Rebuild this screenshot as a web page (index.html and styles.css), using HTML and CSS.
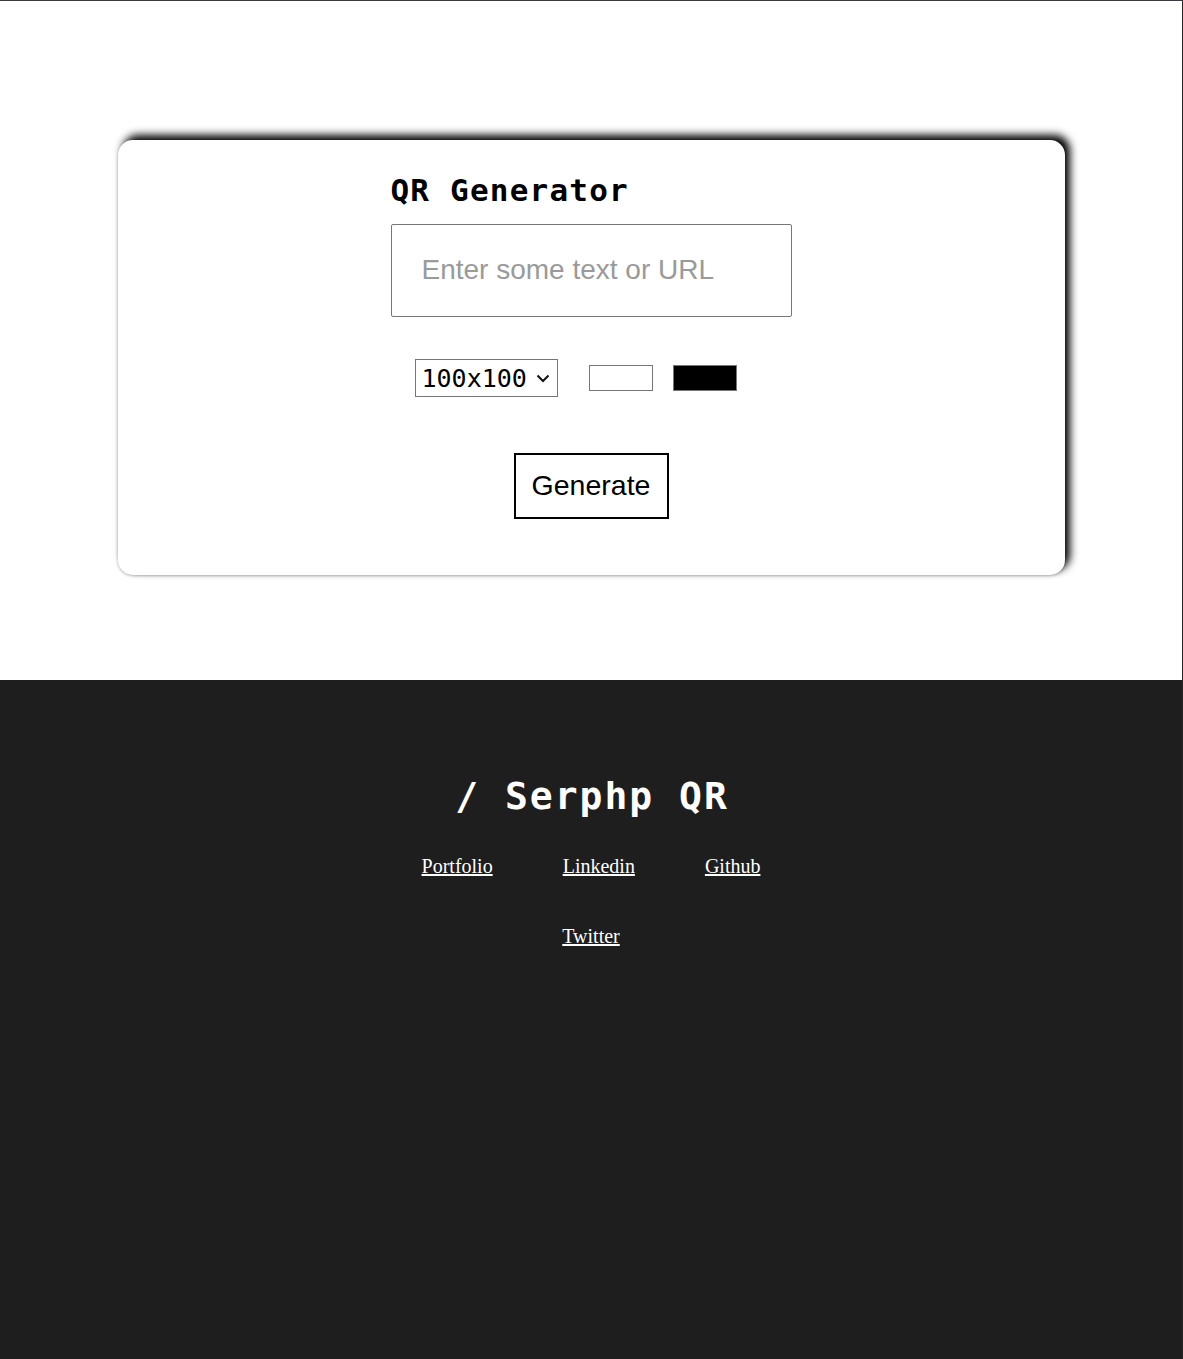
FILE: index.html
```html
<!DOCTYPE html>
<html lang="en">
<head>
<meta charset="utf-8">
<title>Serphp QR</title>
<link rel="stylesheet" href="styles.css">
</head>
<body>
<main class="hero">
  <section class="card">
    <div class="inner">
      <h1 class="title">QR Generator</h1>
      <input class="text-input" type="text" placeholder="Enter some text or URL">
      <div class="options">
        <div class="select-wrap">
          <select class="size-select">
            <option>100x100</option>
            <option>200x200</option>
            <option>300x300</option>
          </select>
          <svg class="chevron" width="14" height="9" viewBox="0 0 14 9"><path d="M1.5 1.5 L7 7 L12.5 1.5" fill="none" stroke="#111" stroke-width="2"/></svg>
        </div>
        <span class="swatch swatch-light"></span>
        <span class="swatch swatch-dark"></span>
      </div>
      <button class="generate" type="button">Generate</button>
    </div>
  </section>
</main>
<footer class="footer">
  <h2 class="brand">/ Serphp QR</h2>
  <nav class="links">
    <a href="#">Portfolio</a>
    <a href="#">Linkedin</a>
    <a href="#">Github</a>
    <a href="#">Twitter</a>
  </nav>
</footer>
</body>
</html>
```

FILE: styles.css
```css
html, body {
  margin: 0;
  padding: 0;
}

body {
  background: #ffffff;
  border-top: 1px solid #3c3c44;
  border-right: 1px solid #26262a;
  font-family: "DejaVu Sans Mono", monospace;
}

.hero {
  height: 679px;
  box-sizing: border-box;
  padding-top: 139px;
  background: #ffffff;
}

.card {
  width: 947px;
  margin: 0 auto;
  box-sizing: border-box;
  background: #ffffff;
  border-radius: 15px;
  box-shadow: 5px -5px 8px #000000, 0 1px 3px rgba(0, 0, 0, 0.25);
  padding: 32px 0 56px;
}

.inner {
  width: 401px;
  margin: 0 auto;
  display: flex;
  flex-direction: column;
}

.title {
  margin: 0;
  font-family: "DejaVu Sans Mono", monospace;
  font-weight: bold;
  font-size: 31px;
  line-height: 37px;
  letter-spacing: 1.2px;
  color: #000;
}

.text-input {
  margin-top: 15px;
  width: 401px;
  height: 93px;
  box-sizing: border-box;
  border: 1px solid #767676;
  border-radius: 2px;
  padding: 0 30px 2px;
  font-family: "Liberation Sans", Arial, sans-serif;
  font-size: 28px;
  color: #000;
  outline: none;
}

.text-input::placeholder {
  color: #9a9a9a;
}

.options {
  margin-top: 42px;
  display: flex;
  align-items: center;
  padding-left: 24px;
  height: 38px;
}

.select-wrap {
  position: relative;
  width: 143px;
  height: 38px;
}

.size-select {
  appearance: none;
  -webkit-appearance: none;
  width: 143px;
  height: 38px;
  box-sizing: border-box;
  border: 1px solid #767676;
  border-radius: 0;
  background: #fff;
  padding: 0 0 0 6px;
  font-family: "DejaVu Sans Mono", monospace;
  font-size: 25px;
  color: #000;
  outline: none;
}

.chevron {
  position: absolute;
  right: 8px;
  top: 15px;
  pointer-events: none;
}

.swatch {
  display: block;
  width: 64px;
  height: 26px;
  box-sizing: border-box;
  border: 1px solid #767676;
}

.swatch-light {
  margin-left: 31px;
  background: #ffffff;
}

.swatch-dark {
  margin-left: 20px;
  background: #000000;
}

.generate {
  align-self: center;
  margin-top: 56px;
  box-sizing: border-box;
  width: 155px;
  height: 66px;
  padding: 0 0 2px;
  border: 2px solid #000;
  background: #fff;
  font-family: "Liberation Sans", Arial, sans-serif;
  font-size: 28.5px;
  color: #000;
  cursor: pointer;
}

.footer {
  height: 679px;
  box-sizing: border-box;
  background: #1e1e1e;
  padding-top: 94px;
  display: flex;
  flex-direction: column;
  align-items: center;
}

.brand {
  margin: 0;
  padding-left: 2px;
  font-family: "DejaVu Sans Mono", monospace;
  font-weight: bold;
  font-size: 38px;
  line-height: 44px;
  letter-spacing: 2px;
  color: #ffffff;
}

.links {
  margin-top: 37px;
  width: 500px;
  display: flex;
  flex-wrap: wrap;
  justify-content: center;
  row-gap: 47px;
}

.links a {
  margin: 0 35px;
  font-family: "Liberation Serif", "Times New Roman", serif;
  font-size: 20px;
  line-height: 23px;
  color: #ffffff;
  text-decoration: underline;
}
```
